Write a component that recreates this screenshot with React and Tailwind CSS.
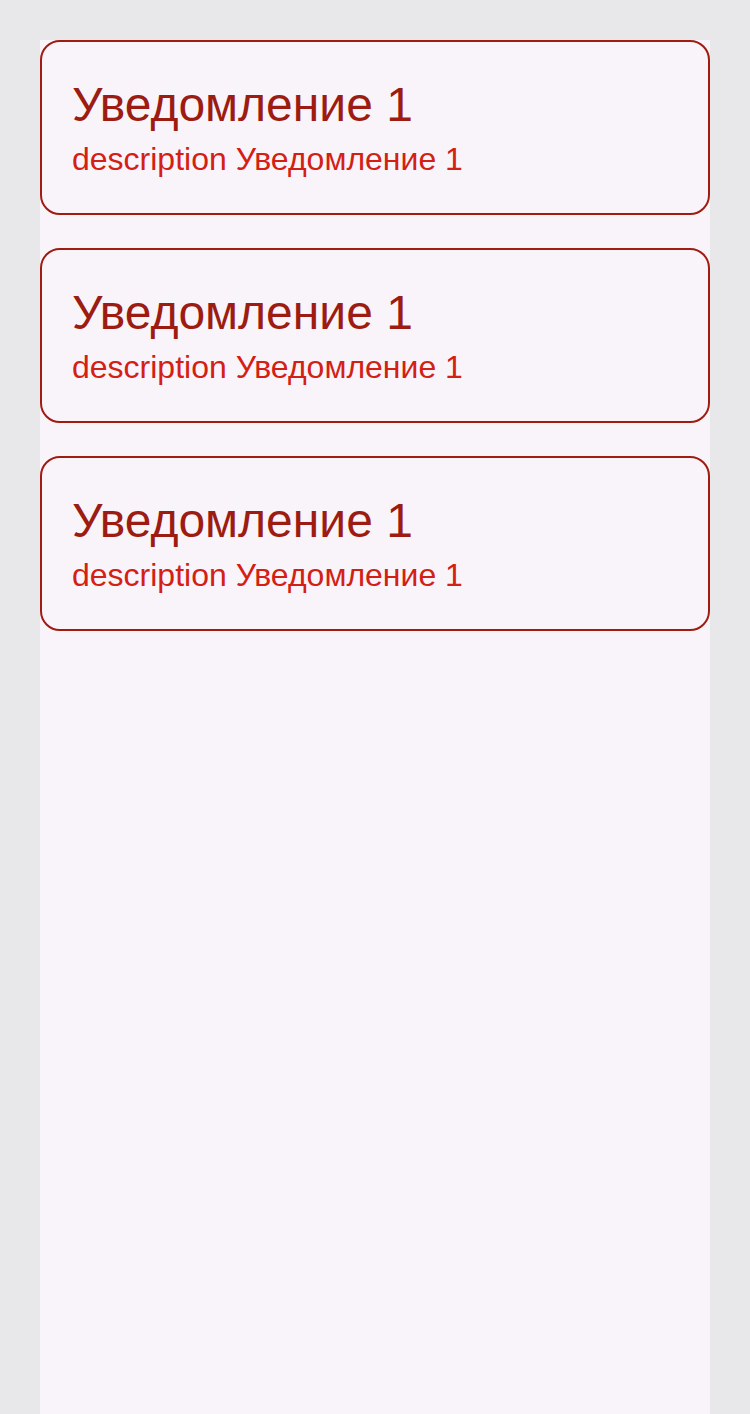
export default function App() {
  const items = [1, 2, 3];
  return (
    <div className="min-h-screen bg-[#e8e8ea] px-[40px] pt-[40px] font-['Liberation_Sans',Arial,sans-serif]">
      <div className="min-h-[1374px] bg-[#f8f4fa] flex flex-col gap-[33px]">
        {items.map((i) => (
          <div key={i} className="h-[175px] border-2 border-[#a01c10] rounded-[20px] pl-[30px] pt-[35px]">
            <div className="text-[48px] leading-[55px] text-[#9c1c12]">Уведомление 1</div>
            <div className="mt-[9px] text-[32px] leading-[37px] text-[#d42014]">description Уведомление 1</div>
          </div>
        ))}
      </div>
    </div>
  );
}
